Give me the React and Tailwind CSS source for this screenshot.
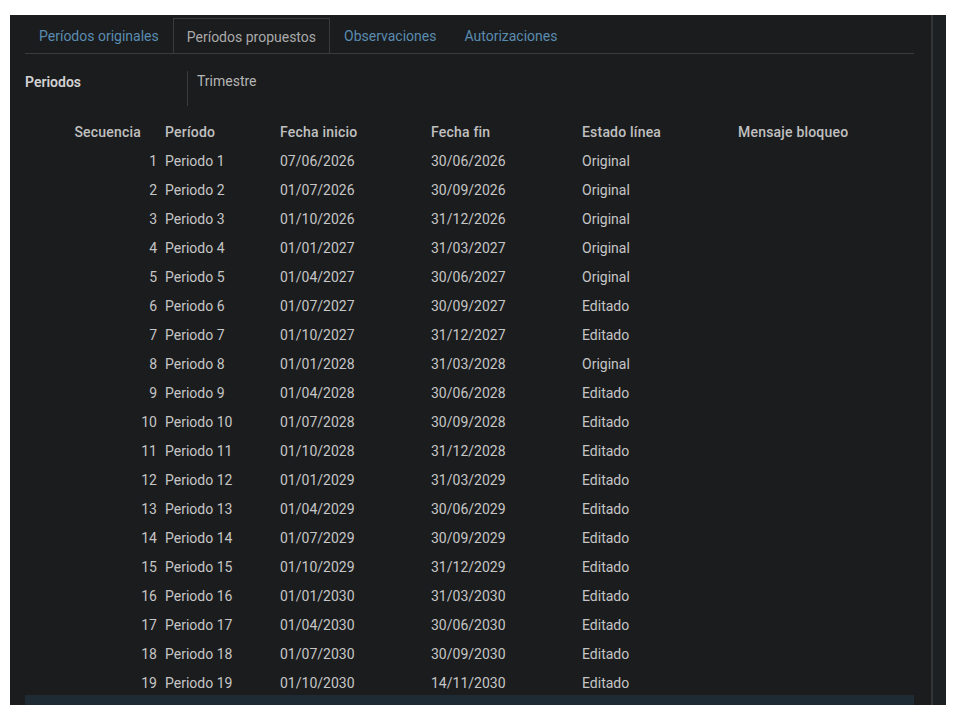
const tabs = [
  { label: "Períodos originales", active: false },
  { label: "Períodos propuestos", active: true },
  { label: "Observaciones", active: false },
  { label: "Autorizaciones", active: false },
];

const rows = [
  ["1", "Periodo 1", "07/06/2026", "30/06/2026", "Original"],
  ["2", "Periodo 2", "01/07/2026", "30/09/2026", "Original"],
  ["3", "Periodo 3", "01/10/2026", "31/12/2026", "Original"],
  ["4", "Periodo 4", "01/01/2027", "31/03/2027", "Original"],
  ["5", "Periodo 5", "01/04/2027", "30/06/2027", "Original"],
  ["6", "Periodo 6", "01/07/2027", "30/09/2027", "Editado"],
  ["7", "Periodo 7", "01/10/2027", "31/12/2027", "Editado"],
  ["8", "Periodo 8", "01/01/2028", "31/03/2028", "Original"],
  ["9", "Periodo 9", "01/04/2028", "30/06/2028", "Editado"],
  ["10", "Periodo 10", "01/07/2028", "30/09/2028", "Editado"],
  ["11", "Periodo 11", "01/10/2028", "31/12/2028", "Editado"],
  ["12", "Periodo 12", "01/01/2029", "31/03/2029", "Editado"],
  ["13", "Periodo 13", "01/04/2029", "30/06/2029", "Editado"],
  ["14", "Periodo 14", "01/07/2029", "30/09/2029", "Editado"],
  ["15", "Periodo 15", "01/10/2029", "31/12/2029", "Editado"],
  ["16", "Periodo 16", "01/01/2030", "31/03/2030", "Editado"],
  ["17", "Periodo 17", "01/04/2030", "30/06/2030", "Editado"],
  ["18", "Periodo 18", "01/07/2030", "30/09/2030", "Editado"],
  ["19", "Periodo 19", "01/10/2030", "14/11/2030", "Editado"],
];

const cols =
  "grid grid-cols-[135px_115px_151px_151px_156px_1fr] h-[29px] items-center pt-[5px]";

export default function App() {
  return (
    <div className="min-h-screen bg-white pt-[15px] pl-[10px] font-['Roboto',sans-serif] text-[14px]">
      <div className="w-[936px] h-[690px] bg-[#1b1c1e] flex overflow-hidden">
        {/* contenido */}
        <div className="w-[921px] pl-[15px] pr-[17px] pt-[3px] flex flex-col">
          {/* tabs */}
          <div className="flex border-b border-[#3a3b3c] h-[36px]">
            {tabs.map((t) => (
              <div
                key={t.label}
                className={`px-[13px] pt-[2px] flex items-center h-[35px] border ${
                  t.active
                    ? "border-b-0 border-[#3a3b3c] text-[#aaaaaa]"
                    : "border-transparent text-[#5a8cb0]"
                }`}>
                {t.label}
              </div>
            ))}
          </div>

          {/* periodos */}
          <div className="flex mt-[17px] h-[37px]">
            <div className="w-[162px] pt-[1px] font-semibold text-[#d2d2d2]">
              Periodos
            </div>
            <div className="border-l border-[#3a3b3c] pl-[9px] text-[#b5b5b5]">
              Trimestre
            </div>
          </div>

          {/* tabla */}
          <div className="mt-[9px] flex-1 flex flex-col">
            <div className={`${cols} font-medium tracking-[0.2px] text-[#c0c0c0]`}>
              <div className="text-right pr-[19px]">Secuencia</div>
              <div className="pl-[5px]">Período</div>
              <div className="pl-[5px]">Fecha inicio</div>
              <div className="pl-[5px]">Fecha fin</div>
              <div className="pl-[5px]">Estado línea</div>
              <div className="pl-[5px]">Mensaje bloqueo</div>
            </div>
            {rows.map((r) => (
              <div key={r[0]} className={`${cols} text-[#c6c6c6]`}>
                <div className="text-right pr-[3px]">{r[0]}</div>
                <div className="pl-[5px]">{r[1]}</div>
                <div className="pl-[5px]">{r[2]}</div>
                <div className="pl-[5px]">{r[3]}</div>
                <div className="pl-[5px]">{r[4]}</div>
                <div className="pl-[5px]"></div>
              </div>
            ))}
            <div className="h-[10px] bg-[#1e2b35]"></div>
          </div>
        </div>
        {/* separador */}
        <div className="w-[2px] bg-[#333436]"></div>
        <div className="flex-1 bg-[#1c2022]"></div>
      </div>
    </div>
  );
}
